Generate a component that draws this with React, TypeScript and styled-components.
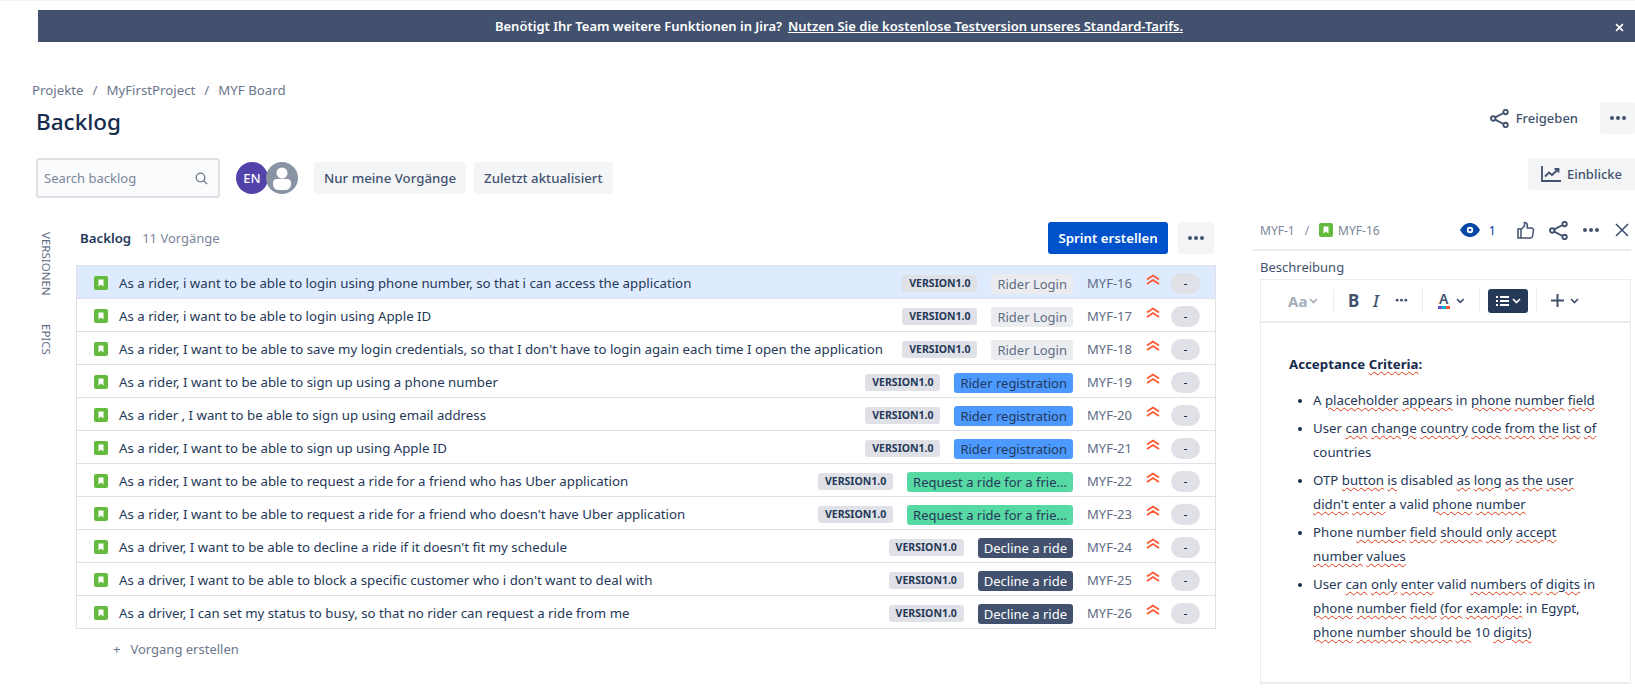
import * as React from "react";
import styled, { createGlobalStyle } from "styled-components";

const GlobalStyle = createGlobalStyle`
    html, body {
        margin: 0;
        padding: 0;
        background: #fff;
        overflow: hidden;
    }
    body {
        font-family: "Noto Sans", "Liberation Sans", sans-serif;
        font-size: 13.25px;
        color: #172b4d;
    }
`;

// styles
const Page = styled.div`
    width: 1635px;
    height: 690px;
    overflow: hidden;
    border-top: 1px solid #f4f5f7;
    box-sizing: border-box;
`;

const Banner = styled.div`
    position: relative;
    margin: 9px 0 0 38px;
    height: 32px;
    display: flex;
    align-items: center;
    justify-content: center;
    padding-left: 5px;
    background: #42526e;
    color: #fff;
    font-size: 13px;
    font-weight: 600;
`;
const BannerLink = styled.span`
    margin-left: 6px;
    text-decoration: underline;
`;
const BannerClose = styled.span`
    position: absolute;
    right: 11px;
    top: 13px;
    display: flex;
`;

const Head = styled.header`
    padding: 38px 0 0 32px;
`;
const Crumbs = styled.nav`
    display: flex;
    gap: 9px;
    height: 20px;
    align-items: center;
    color: #6b778c;
    font-size: 13.25px;
`;
const TitleRow = styled.div`
    display: flex;
    align-items: center;
    justify-content: space-between;
    height: 32px;
    margin-top: 2px;
    padding-left: 4px;
`;
const Title = styled.h1`
    margin: 6px 0 0;
    font-size: 22.5px;
    font-weight: 500;
    color: #172b4d;
`;
const Actions = styled.div`
    display: flex;
    align-items: center;
`;
const ShareLink = styled.span`
    display: flex;
    align-items: center;
    gap: 7px;
    margin-right: 22px;
    color: #42526e;
    font-size: 13px;
    font-weight: 500;
`;
const GreyButton = styled.button<{ $w?: number }>`
    display: flex;
    align-items: center;
    justify-content: center;
    gap: 6px;
    height: 32px;
    width: ${(p) => (p.$w ? `${p.$w}px` : "auto")};
    padding: ${(p) => (p.$w ? "0" : "0 10px")};
    border: 0;
    border-radius: 3px;
    background: #f4f5f7;
    color: #42526e;
    font-family: inherit;
    font-size: 13.25px;
    font-weight: 500;
`;

const Toolbar = styled.div`
    display: flex;
    align-items: flex-start;
    height: 40px;
    margin-top: 24px;
    padding-left: 4px;
`;
const Search = styled.div`
    display: flex;
    align-items: center;
    justify-content: space-between;
    box-sizing: border-box;
    width: 184px;
    height: 40px;
    padding: 0 10px 0 6px;
    border: 2px solid #dfe1e6;
    border-radius: 3px;
    background: #fafbfc;
    color: #7a869a;
    font-size: 13px;
`;
const Avatars = styled.div`
    display: flex;
    margin: 4px 16px 0 16px;
`;
const Avatar = styled.span`
    display: flex;
    align-items: center;
    justify-content: center;
    width: 32px;
    height: 32px;
    border-radius: 50%;
    background: #5243aa;
    color: #fff;
    font-size: 13px;
    font-weight: 500;
`;
const Ghost = styled.span`
    display: flex;
    margin-left: -2px;
`;
const Filters = styled.div`
    display: flex;
    gap: 8px;
    margin-top: 4px;
`;
const Insights = styled(GreyButton)`
    margin-left: auto;
    width: 107px;
    border-radius: 3px 0 0 3px;
    font-size: 13px;
`;

const Main = styled.main`
    display: flex;
    margin-top: 24px;
`;
const SideTabs = styled.aside`
    display: flex;
    flex-direction: column;
    gap: 28px;
    width: 16px;
    margin-left: 38px;
    margin-right: 22px;
    padding-top: 10px;
`;
const SideTab = styled.span`
    writing-mode: vertical-rl;
    color: #5e6c84;
    font-size: 11.5px;
    line-height: 16px;
`;

const ListColumn = styled.section`
    width: 1140px;
`;
const ListHead = styled.div`
    display: flex;
    align-items: center;
    height: 32px;
    padding-left: 4px;
    margin-bottom: 11px;
`;
const ListTitle = styled.strong`
    font-size: 13.25px;
    font-weight: 600;
    color: #253858;
`;
const ListCount = styled.span`
    margin-left: 11px;
    color: #7a869a;
    font-size: 13px;
`;
const PrimaryButton = styled.button`
    height: 32px;
    width: 120px;
    margin-left: auto;
    border: 0;
    border-radius: 3px;
    background: #0052cc;
    color: #fff;
    font-family: inherit;
    font-size: 13.25px;
    font-weight: 600;
`;
const MoreButton = styled(GreyButton)`
    margin: 0 2px 0 10px;
`;

const Table = styled.div`
    border: 1px solid #dfe1e6;
`;
const Row = styled.div<{ $selected?: boolean }>`
    display: flex;
    align-items: center;
    box-sizing: border-box;
    height: 33px;
    padding: 2px 15px 0 17px;
    background: ${(p) => (p.$selected ? "#deebff" : "#fff")};
    border-bottom: 1px solid #dfe1e6;

    &:last-child {
        height: 32px;
        border-bottom: 0;
    }
`;
const Summary = styled.span`
    flex: 1;
    margin-left: 11px;
    white-space: nowrap;
    color: #253858;
    font-size: 13.25px;
`;
const Version = styled.span`
    display: flex;
    align-items: center;
    justify-content: center;
    width: 75px;
    height: 17px;
    margin: 0 14px 0 0;
    border-radius: 3px;
    background: #dfe1e6;
    color: #253858;
    font-size: 10.5px;
    font-weight: 700;
`;
const Epic = styled.span<{ $bg: string; $fg: string }>`
    display: flex;
    align-items: center;
    height: 20px;
    margin-top: 2px;
    padding: 0 6px;
    border-radius: 3px;
    background: ${(p) => p.$bg};
    color: ${(p) => p.$fg};
    font-size: 13px;
    white-space: nowrap;
`;
const IssueKey = styled.span`
    width: 47px;
    margin-left: 14px;
    color: #5e6c84;
    font-size: 13px;
    white-space: nowrap;
`;
const Priority = styled.span`
    display: flex;
    margin: -7px 0 0 12px;
`;
const Points = styled.span`
    display: flex;
    align-items: center;
    justify-content: center;
    width: 29px;
    height: 21px;
    margin-left: 11px;
    border-radius: 11px;
    background: #dfe1e6;
    color: #172b4d;
    font-size: 12px;
`;
const CreateIssue = styled.div`
    display: flex;
    gap: 10px;
    margin: 11px 0 0 37px;
    color: #6b778c;
    font-size: 13px;
`;

const Panel = styled.aside`
    width: 379px;
    margin-left: 36px;
`;
const PanelHead = styled.div`
    display: flex;
    align-items: center;
    height: 29px;
    padding: 0 1px 11px 8px;
    box-sizing: border-box;
    border-bottom: 2px solid #ebecf0;
    color: #7a869a;
    font-size: 12px;
`;
const PanelCrumb = styled.span`
    display: flex;
    align-items: center;
    gap: 5px;
`;
const PanelSlash = styled.span`
    margin: 0 10px;
`;
const PanelIcons = styled.div`
    display: flex;
    align-items: center;
    margin-left: auto;
`;
const Watchers = styled.span`
    display: flex;
    align-items: center;
    gap: 9px;
    margin-right: 21px;
    color: #0747a6;
    font-size: 13px;
`;
const PanelIcon = styled.span`
    display: flex;
    margin-left: 14px;
`;
const FieldLabel = styled.div`
    height: 20px;
    margin: 6px 0 0 8px;
    color: #42526e;
    font-size: 13px;
    line-height: 20px;
`;
const Editor = styled.div`
    box-sizing: border-box;
    height: 405px;
    margin: 2px 0 0 8px;
    width: 371px;
    border: 1px solid #ebecf0;
    border-width: 1px 1px 2px 1px;
`;
const EditorBar = styled.div`
    display: flex;
    align-items: center;
    height: 41px;
    padding-left: 27px;
    border-bottom: 2px solid #ebecf0;
    color: #42526e;
`;
const BarGroup = styled.span<{ $w: number }>`
    display: flex;
    align-items: center;
    gap: 2px;
    width: ${(p) => p.$w}px;
`;
const BarSeparator = styled.span`
    width: 1px;
    height: 24px;
    margin: 0 14px;
    background: #ebecf0;
`;
const FontSize = styled.span`
    color: #a5adba;
    font-size: 15px;
    font-weight: 700;
`;
const Bold = styled.span`
    width: 25px;
    font-size: 17px;
    font-weight: 700;
`;
const Italic = styled.span`
    width: 22px;
    font-size: 17px;
    font-weight: 500;
    font-style: italic;
`;
const ColorA = styled.span`
    display: flex;
    flex-direction: column;
    align-items: center;
    width: 14px;
    margin-right: 4px;
    font-size: 14px;
    font-weight: 600;
    line-height: 14px;
`;
const ColorStrip = styled.span`
    width: 12px;
    height: 3px;
    background: linear-gradient(90deg, #6554c0 0 33%, #00b8d9 33% 66%, #ff5630 66%);
`;
const ListToggle = styled.span`
    display: flex;
    align-items: center;
    justify-content: center;
    gap: 3px;
    width: 40px;
    height: 24px;
    margin: 0 -6px 0 -6px;
    border-radius: 3px;
    background: #253858;
    color: #fff;
`;
const Plus = styled.span`
    display: flex;
    margin-right: 6px;
`;
const EditorBody = styled.div`
    padding: 29px 20px 0 28px;
    color: #253858;
    font-size: 13.25px;
    line-height: 24px;
`;
const Heading = styled.div`
    font-weight: 700;
    color: #172b4d;
`;
const Bullets = styled.ul`
    margin: 12px 0 0;
    padding-left: 24px;
`;
const Bullet = styled.li`
    margin-bottom: 4px;

    &::marker {
        font-size: 11px;
        color: #172b4d;
    }
`;
const Typo = styled.span`
    text-decoration: underline wavy #de350b 1px;
    text-underline-offset: 2px;
`;

// icons
const StoryIcon = () => (
    <svg width="14" height="14" viewBox="0 0 14 14">
        <rect width="14" height="14" rx="2" fill="#63ba3c" />
        <path d="M4.5 3.5h5v7L7 8.6l-2.5 1.9z" fill="#fff" />
    </svg>
);
const ShareIcon = ({ size = 19 }: { size?: number }) => (
    <svg width={size} height={size} viewBox="0 0 19 19" fill="none" stroke="#42526e" strokeWidth="1.9">
        <circle cx="3.2" cy="9.5" r="2.2" />
        <circle cx="15.6" cy="3" r="2.2" />
        <circle cx="15.6" cy="16" r="2.2" />
        <path d="M5.2 8.4l8.4-4.4M5.2 10.6l8.4 4.4" />
    </svg>
);
const Dots = ({ color = "#42526e", width = 18 }: { color?: string; width?: number }) => (
    <svg width={width} height={(width * 6) / 18} viewBox="0 0 18 6" fill={color}>
        <circle cx="3" cy="3" r="2" />
        <circle cx="9" cy="3" r="2" />
        <circle cx="15" cy="3" r="2" />
    </svg>
);
const Chevron = ({ color = "#42526e", size = 9 }: { color?: string; size?: number }) => (
    <svg width={size} height="6" viewBox="0 0 9 6" fill="none" stroke={color} strokeWidth="1.7">
        <path d="M1 1l3.5 3.5L8 1" />
    </svg>
);
const Cross = ({ size, color, width }: { size: number; color: string; width: number }) => (
    <svg width={size} height={size} viewBox="0 0 16 16" stroke={color} strokeWidth={width} fill="none">
        <path d="M2 2l12 12M14 2L2 14" />
    </svg>
);
const PriorityIcon = () => (
    <svg width="14" height="11" viewBox="0 0 14 11" fill="none" stroke="#ff5630" strokeWidth="1.8">
        <path d="M1 5.5L7 1.500l6 4M1 10l6-4 6 4" />
    </svg>
);

type Issue = {
    id: string;
    text: string;
    epic: string;
    bg: string;
    fg: string;
};

const login = { epic: "Rider Login", bg: "#ebecf0", fg: "#5e6c84" };
const registration = { epic: "Rider registration", bg: "#4c9aff", fg: "#253858" };
const friend = { epic: "Request a ride for a frie...", bg: "#57d9a3", fg: "#253858" };
const decline = { epic: "Decline a ride", bg: "#42526e", fg: "#fff" };

const issues: Issue[] = [
    { id: "MYF-16", text: "As a rider, i want to be able to login using phone number, so that i can access the application", ...login },
    { id: "MYF-17", text: "As a rider, i want to be able to login using Apple ID", ...login },
    { id: "MYF-18", text: "As a rider, I want to be able to save my login credentials, so that I don't have to login again each time I open the application", ...login },
    { id: "MYF-19", text: "As a rider, I want to be able to sign up using a phone number", ...registration },
    { id: "MYF-20", text: "As a rider , I want to be able to sign up using email address", ...registration },
    { id: "MYF-21", text: "As a rider, I want to be able to sign up using Apple ID", ...registration },
    { id: "MYF-22", text: "As a rider, I want to be able to request a ride for a friend who has Uber application", ...friend },
    { id: "MYF-23", text: "As a rider, I want to be able to request a ride for a friend who doesn't have Uber application", ...friend },
    { id: "MYF-24", text: "As a driver, I want to be able to decline a ride if it doesn't fit my schedule", ...decline },
    { id: "MYF-25", text: "As a driver, I want to be able to block a specific customer who i don't want to deal with", ...decline },
    { id: "MYF-26", text: "As a driver, I can set my status to busy, so that no rider can request a ride from me", ...decline },
];

// markup
const App = () => {
    return (
        <Page>
            <GlobalStyle />
            <Banner>
                Benötigt Ihr Team weitere Funktionen in Jira?
                <BannerLink>Nutzen Sie die kostenlose Testversion unseres Standard-Tarifs.</BannerLink>
                <BannerClose>
                    <Cross size={9} color="#fff" width={3} />
                </BannerClose>
            </Banner>

            <Head>
                <Crumbs>
                    <span>Projekte</span>
                    <span>/</span>
                    <span>MyFirstProject</span>
                    <span>/</span>
                    <span>MYF Board</span>
                </Crumbs>
                <TitleRow>
                    <Title>Backlog</Title>
                    <Actions>
                        <ShareLink>
                            <ShareIcon />
                            Freigeben
                        </ShareLink>
                        <GreyButton $w={35}>
                            <Dots />
                        </GreyButton>
                    </Actions>
                </TitleRow>
                <Toolbar>
                    <Search>
                        Search backlog
                        <svg width="13" height="13" viewBox="0 0 13 13" fill="none" stroke="#6b778c" strokeWidth="1.3">
                            <circle cx="5.5" cy="5.5" r="4.3" />
                            <path d="M8.7 8.7l3.4 3.4" />
                        </svg>
                    </Search>
                    <Avatars>
                        <Avatar>EN</Avatar>
                        <Ghost>
                            <svg width="32" height="32" viewBox="0 0 32 32">
                                <circle cx="16" cy="16" r="16" fill="#8993a4" />
                                <circle cx="16" cy="11" r="5.5" fill="#fff" />
                                <path d="M7 21a4 4 0 0 1 4-4h10a4 4 0 0 1 4 4v2a6 6 0 0 1-6 5h-6a6 6 0 0 1-6-5z" fill="#fff" />
                            </svg>
                        </Ghost>
                    </Avatars>
                    <Filters>
                        <GreyButton>Nur meine Vorgänge</GreyButton>
                        <GreyButton>Zuletzt aktualisiert</GreyButton>
                    </Filters>
                    <Insights>
                        <svg width="20" height="16" viewBox="0 0 20 16" fill="none" stroke="#42526e" strokeWidth="1.8">
                            <path d="M1 0v15h19" />
                            <path d="M4 10.5l4-4 3 2.5 6-5.5M13.5 3H17.5v3.5" />
                        </svg>
                        Einblicke
                    </Insights>
                </Toolbar>
            </Head>

            <Main>
                <SideTabs>
                    <SideTab>VERSIONEN</SideTab>
                    <SideTab>EPICS</SideTab>
                </SideTabs>

                <ListColumn>
                    <ListHead>
                        <ListTitle>Backlog</ListTitle>
                        <ListCount>11 Vorgänge</ListCount>
                        <PrimaryButton>Sprint erstellen</PrimaryButton>
                        <MoreButton $w={36}>
                            <Dots />
                        </MoreButton>
                    </ListHead>
                    <Table>
                        {issues.map((issue, i) => (
                            <Row key={issue.id} $selected={i === 0}>
                                <StoryIcon />
                                <Summary>{issue.text}</Summary>
                                <Version>VERSION1.0</Version>
                                <Epic $bg={issue.bg} $fg={issue.fg}>
                                    {issue.epic}
                                </Epic>
                                <IssueKey>{issue.id}</IssueKey>
                                <Priority>
                                    <PriorityIcon />
                                </Priority>
                                <Points>-</Points>
                            </Row>
                        ))}
                    </Table>
                    <CreateIssue>
                        <span>+</span>
                        <span>Vorgang erstellen</span>
                    </CreateIssue>
                </ListColumn>

                <Panel>
                    <PanelHead>
                        <PanelCrumb>MYF-1</PanelCrumb>
                        <PanelSlash>/</PanelSlash>
                        <PanelCrumb>
                            <StoryIcon />
                            MYF-16
                        </PanelCrumb>
                        <PanelIcons>
                            <Watchers>
                                <svg width="20" height="16" viewBox="0 0 20 16">
                                    <path d="M0 8c2.500-4.500 6-7 10-7s7.500 2.500 10 7c-2.500 4.500-6 7-10 7S2.500 12.500 0 8z" fill="#0747a6" />
                                    <circle cx="10" cy="8" r="3.200" fill="#fff" />
                                    <circle cx="10" cy="8" r="1.300" fill="#0747a6" />
                                </svg>
                                1
                            </Watchers>
                            <svg width="18" height="18" viewBox="0 0 18 18" fill="none" stroke="#42526e" strokeWidth="1.500">
                                <path d="M1 8h3v9H1zM4 8.500l3.500-3.500V1.500c1.800 0 2.800 1.200 2.800 2.800V7h4.200c1.300 0 2.200 1 2 2.200l-.9 5.800c-.2 1.200-1 2-2.200 2H4" />
                            </svg>
                            <PanelIcon>
                                <ShareIcon />
                            </PanelIcon>
                            <PanelIcon>
                                <Dots />
                            </PanelIcon>
                            <PanelIcon>
                                <Cross size={16} color="#42526e" width={1.600} />
                            </PanelIcon>
                        </PanelIcons>
                    </PanelHead>
                    <FieldLabel>Beschreibung</FieldLabel>
                    <Editor>
                        <EditorBar>
                            <BarGroup $w={31}>
                                <FontSize>Aa</FontSize>
                                <Chevron color="#a5adba" />
                            </BarGroup>
                            <BarSeparator />
                            <Bold>B</Bold>
                            <Italic>I</Italic>
                            <Dots width={13} />
                            <BarSeparator />
                            <BarGroup $w={28}>
                                <ColorA>
                                    A
                                    <ColorStrip />
                                </ColorA>
                                <Chevron />
                            </BarGroup>
                            <BarSeparator />
                            <ListToggle>
                                <svg width="13" height="12" viewBox="0 0 13 12" fill="#fff">
                                    <path d="M0 1h2v2H0zM4 1h9v2H4zM0 5h2v2H0zM4 5h9v2H4zM0 9h2v2H0zM4 9h9v2H4z" />
                                </svg>
                                <Chevron color="#fff" />
                            </ListToggle>
                            <BarSeparator />
                            <Plus>
                                <svg width="13" height="13" viewBox="0 0 13 13" stroke="#42526e" strokeWidth="2">
                                    <path d="M6.500 0v13M0 6.500h13" />
                                </svg>
                            </Plus>
                            <Chevron />
                        </EditorBar>
                        <EditorBody>
                            <Heading>
                                Acceptance <Typo>Criteria</Typo>:
                            </Heading>
                            <Bullets>
                                <Bullet>
                                    A <Typo>placeholder</Typo> <Typo>appears</Typo> in <Typo>phone</Typo> <Typo>number</Typo> <Typo>field</Typo>
                                </Bullet>
                                <Bullet>
                                    User <Typo>can</Typo> <Typo>change</Typo> <Typo>country</Typo> <Typo>code</Typo> <Typo>from</Typo> <Typo>the</Typo> <Typo>list</Typo> <Typo>of</Typo>
                                    <br />
                                    countries
                                </Bullet>
                                <Bullet>
                                    OTP <Typo>button</Typo> <Typo>is</Typo> disabled <Typo>as</Typo> <Typo>long</Typo> <Typo>as</Typo> <Typo>the</Typo> <Typo>user</Typo>
                                    <br />
                                    <Typo>didn't</Typo> <Typo>enter</Typo> a valid <Typo>phone</Typo> <Typo>number</Typo>
                                </Bullet>
                                <Bullet>
                                    Phone <Typo>number</Typo> <Typo>field</Typo> <Typo>should</Typo> <Typo>only</Typo> <Typo>accept</Typo>
                                    <br />
                                    <Typo>number</Typo> <Typo>values</Typo>
                                </Bullet>
                                <Bullet>
                                    User <Typo>can</Typo> <Typo>only</Typo> <Typo>enter</Typo> valid <Typo>numbers</Typo> <Typo>of</Typo> <Typo>digits</Typo> in
                                    <br />
                                    <Typo>phone</Typo> <Typo>number</Typo> <Typo>field</Typo> <Typo>(for</Typo> <Typo>example:</Typo> in Egypt,
                                    <br />
                                    <Typo>phone</Typo> <Typo>number</Typo> <Typo>should</Typo> <Typo>be</Typo> 10 <Typo>digits)</Typo>
                                </Bullet>
                            </Bullets>
                        </EditorBody>
                    </Editor>
                </Panel>
            </Main>
        </Page>
    );
};

export default App;
